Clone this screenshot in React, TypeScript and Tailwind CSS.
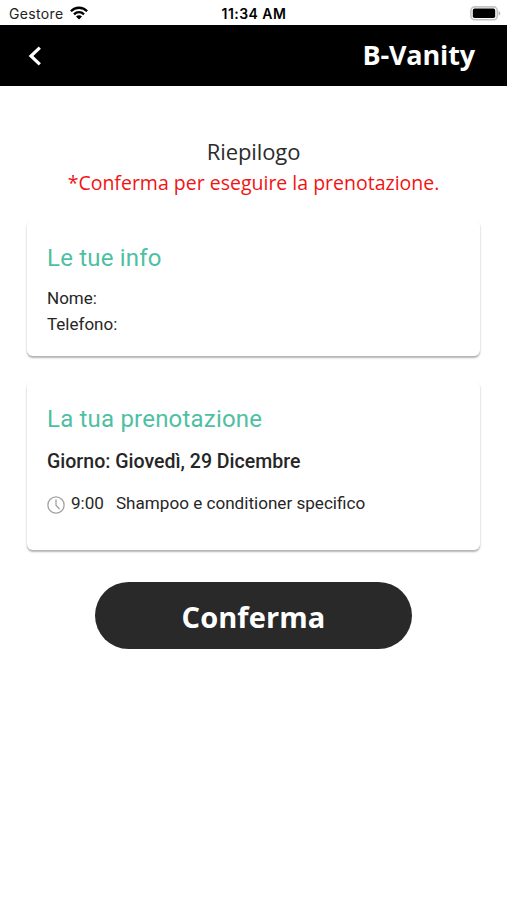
import type { ReactNode } from 'react';

const WifiIcon = () => (
  <svg width="18" height="14" viewBox="0 0 18 14" fill="none" stroke="#000" strokeWidth="2.3">
    <path d="M0.9 5.2C5.4 0.6 12.6 0.6 17.1 5.2" />
    <path d="M4 8.3C6.9 5.5 11.1 5.5 14 8.3" />
    <path d="M9 13.6L6 10.5C7.7 8.9 10.3 8.9 12 10.5Z" fill="#000" stroke="none" />
  </svg>
);

const BatteryIcon = () => (
  <svg width="31" height="15" viewBox="0 0 31 15" fill="none">
    <rect x="0.9" y="0.9" width="26.4" height="12.8" rx="3.8" fill="#fff" stroke="#c4c4c4" strokeWidth="1.6" />
    <rect x="2.8" y="2.6" width="22.4" height="9.4" rx="1.8" fill="#000" />
    <path d="M28.6 5C30.8 5.8 30.8 8.8 28.6 9.6Z" fill="#b5b5b5" />
  </svg>
);

const ClockIcon = () => (
  <svg width="18" height="18" viewBox="0 0 18 18" fill="none" stroke="#a3a3a3" strokeWidth="1.3">
    <circle cx="9" cy="9" r="8.1" />
    <path d="M9 3.8V9.2L12.2 12.8" strokeLinecap="round" strokeLinejoin="round" />
  </svg>
);

const StatusBar = () => (
  <div className="grid h-[25px] grid-cols-3 items-center bg-white pl-[9px] pr-[6px] pt-[2px] font-['Inter',sans-serif] text-black">
    <div className="flex items-center gap-[6px]">
      <span className="text-[14px] leading-none tracking-[0.35px] text-[#222]">Gestore</span>
      <span className="-mt-[2px]">
        <WifiIcon />
      </span>
    </div>
    <span className="-ml-[2px] text-center text-[14px] font-semibold leading-none tracking-[0.45px]">11:34 AM</span>
    <div className="-mt-[1px] flex justify-end">
      <BatteryIcon />
    </div>
  </div>
);

const Header = () => (
  <header className="flex h-[61px] items-center justify-between bg-black pl-[28px] pr-[32px] text-white">
    <button type="button" aria-label="Indietro">
      <svg width="14" height="20" viewBox="0 0 14 20" fill="none" stroke="currentColor" strokeWidth="3.2">
        <path d="M11.8 1.6L3 10L11.8 18.4" />
      </svg>
    </button>
    <h1 className="pb-[2px] text-[27px] font-bold leading-none tracking-[-0.15px]">B-Vanity</h1>
  </header>
);

const Card = ({ title, children }: { title: string; children: ReactNode }) => (
  <section className="rounded-[6px] bg-white px-5 font-['Roboto',sans-serif] text-[#262626] shadow-[0_2px_2px_rgba(0,0,0,0.28),0_1px_3px_rgba(0,0,0,0.05)]">
    <h2 className="pt-[22px] text-[24px] leading-[32px] tracking-[0.2px] text-[#4fbfa3]">{title}</h2>
    {children}
  </section>
);

export default function App() {
  return (
    <div className="min-h-[900px] w-full bg-white font-['Open_Sans',sans-serif]">
      <StatusBar />
      <Header />

      <main className="flex flex-col px-[27px] pt-[51px]">
        <div className="whitespace-nowrap text-center">
          <p className="text-[22px] leading-[28px] tracking-[-0.1px] text-[#2b2b2b]">Riepilogo</p>
          <p className="mt-[3px] text-[19.5px] leading-[30px] text-[#f01414]">*Conferma per eseguire la prenotazione.</p>
        </div>

        <div className="mt-[22px] flex flex-col gap-[25px]">
          <Card title="Le tue info">
            <div className="pb-[19px] pt-[11px] text-[17px] leading-[26px]">
              <p>Nome:</p>
              <p>Telefono:</p>
            </div>
          </Card>

          <Card title="La tua prenotazione">
            <p className="pt-[14px] text-[19.55px] font-medium leading-[26px]">Giorno: Giovedì, 29 Dicembre</p>
            <div className="flex items-center pb-[34px] pt-[15px] text-[17.1px] leading-[26px]">
              <span className="pt-[4px]">
                <ClockIcon />
              </span>
              <span className="ml-[6px]">9:00</span>
              <span className="ml-[12px]">Shampoo e conditioner specifico</span>
            </div>
          </Card>
        </div>

        <button
          type="button"
          className="mt-[32px] h-[67px] w-[317px] self-center rounded-full bg-[#292929] pt-[1px] text-[29px] font-bold leading-none tracking-[0.1px] text-white"
        >
          Conferma
        </button>
      </main>
    </div>
  );
}
